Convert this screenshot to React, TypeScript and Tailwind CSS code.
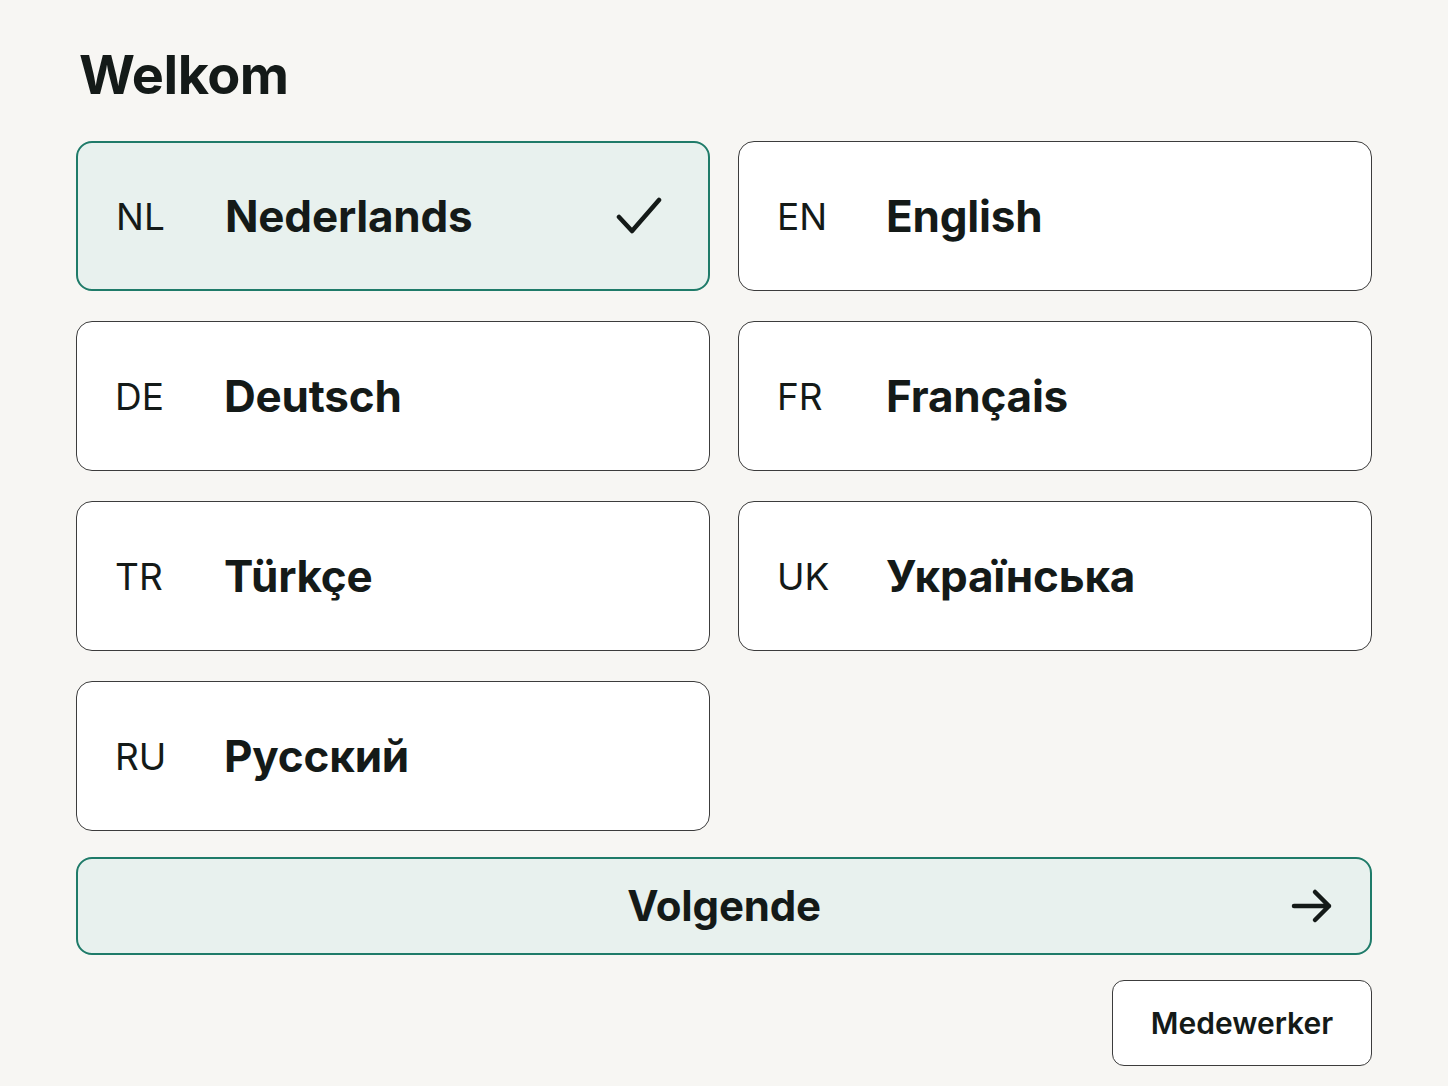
const languages = [
  { code: 'NL', name: 'Nederlands', selected: true },
  { code: 'EN', name: 'English' },
  { code: 'DE', name: 'Deutsch' },
  { code: 'FR', name: 'Français' },
  { code: 'TR', name: 'Türkçe' },
  { code: 'UK', name: 'Українська' },
  { code: 'RU', name: 'Русский' },
]

export default function App() {
  return (
    <div
      className="min-h-[1086px] bg-[#f7f6f3] text-[#141a18] px-[76px] pt-[48px]"
      style={{ fontFamily: 'Inter, "Noto Sans", sans-serif' }}
    >
      <h1 className="text-[54px] font-bold leading-none tracking-[-0.5px] pl-[3px]">Welkom</h1>

      <div className="mt-[39px] grid grid-cols-2 gap-x-[28px] gap-y-[30px]">
        {languages.map((l) => (
          <button
            key={l.code}
            className={
              l.selected
                ? 'h-[150px] flex items-center rounded-[16px] border-2 border-[#1f7b69] bg-[#e8f1ee] pl-[38px] pr-[46px] text-left'
                : 'h-[150px] flex items-center rounded-[16px] border-[1.5px] border-[#3c3c3c] bg-white pl-[38px] pr-[46px] text-left'
            }
          >
            <span className="w-[109px] shrink-0 text-[37px] font-normal leading-none">{l.code}</span>
            <span className="flex-1 text-[44px] font-bold leading-none tracking-[-0.2px]">{l.name}</span>
            {l.selected && (
              <svg width="46" height="40" viewBox="0 0 46 40" fill="none">
                <path d="M3 21 L16 35 L43 4" stroke="#141a18" strokeWidth="4.5" strokeLinecap="round" strokeLinejoin="round" />
              </svg>
            )}
          </button>
        ))}
      </div>

      <button className="mt-[26px] w-full h-[98px] relative flex items-center justify-center rounded-[16px] border-2 border-[#1f7b69] bg-[#e8f1ee]">
        <span className="text-[42px] font-bold leading-none tracking-[-0.2px]">Volgende</span>
        <svg className="absolute right-[37px]" width="42" height="36" viewBox="0 0 42 36" fill="none">
          <path d="M3 18 H38 M24 4 L38 18 L24 32" stroke="#141a18" strokeWidth="4.5" strokeLinecap="round" strokeLinejoin="round" />
        </svg>
      </button>

      <div className="mt-[25px] flex justify-end">
        <button className="w-[260px] h-[86px] rounded-[12px] border-[1.5px] border-[#3c3c3c] bg-white text-[30px] font-semibold">
          Medewerker
        </button>
      </div>
    </div>
  )
}
